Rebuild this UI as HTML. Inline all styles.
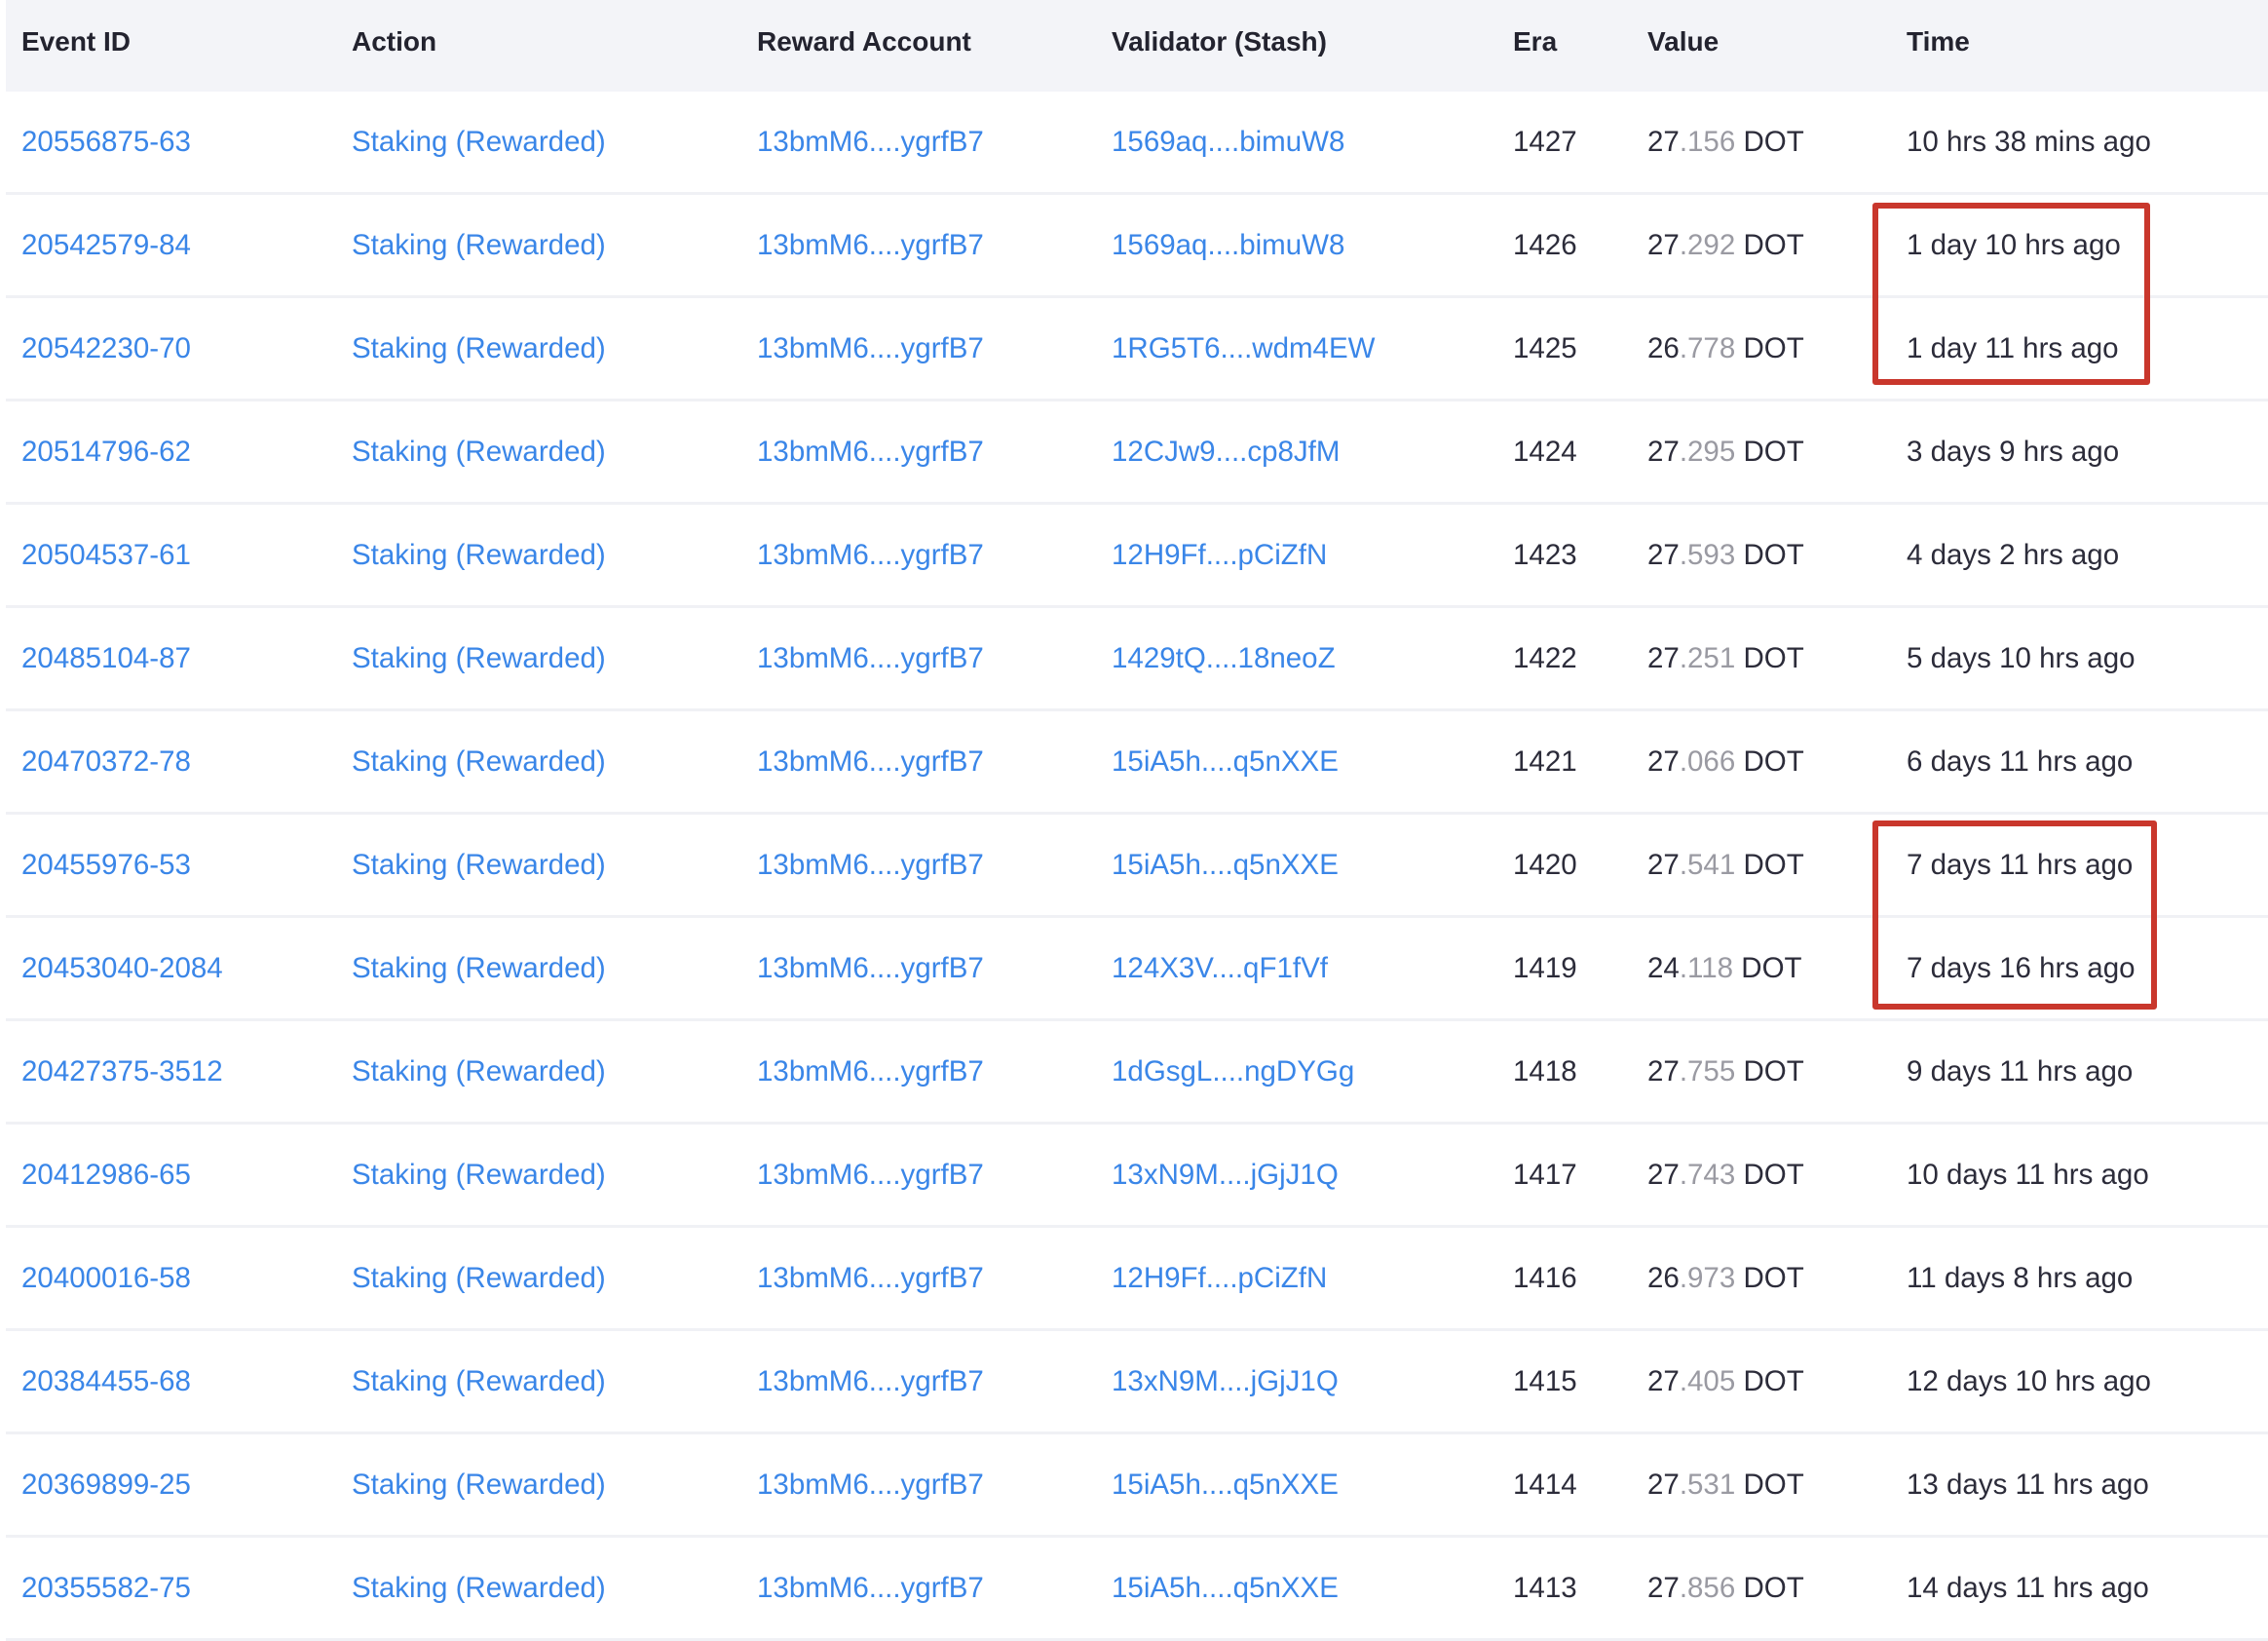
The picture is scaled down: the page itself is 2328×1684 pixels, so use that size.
<!DOCTYPE html>
<html><head><meta charset="utf-8"><style>
*{margin:0;padding:0;box-sizing:border-box}
body{width:2328px;height:1684px;background:#fff;font-family:"Liberation Sans",sans-serif;position:relative;overflow:hidden}
.hd{position:absolute;left:6px;top:0;width:2322px;height:94px;background:#f3f4f8}
.row{position:absolute;left:6px;width:2322px;height:106px;border-bottom:3px solid #f0f1f5}
.c{position:absolute;font-size:29.5px;white-space:nowrap;transform:translateY(-50%);top:50%}
.h .c{color:#23232f;font-weight:600;font-size:28px;top:calc(50% - 4px)}
.l{color:#3a86e8}
.t{color:#2c2c3a}
.g{color:#9a9aa2}
.box{position:absolute;border:6px solid #c9372c;border-radius:3px}
</style></head><body>
<div class="hd h"><div class="c" style="left:16px">Event ID</div><div class="c" style="left:355px">Action</div><div class="c" style="left:771px">Reward Account</div><div class="c" style="left:1135px">Validator (Stash)</div><div class="c" style="left:1547px">Era</div><div class="c" style="left:1685px">Value</div><div class="c" style="left:1951px">Time</div></div>
<div id="rows"></div>
<div class="box" style="left:1922px;top:208px;width:285px;height:187px"></div>
<div class="box" style="left:1922px;top:842px;width:292px;height:194px"></div>
<script>
var d=[["20556875-63","1569aq....bimuW8","1427","27","156","10 hrs 38 mins ago"],
["20542579-84","1569aq....bimuW8","1426","27","292","1 day 10 hrs ago"],
["20542230-70","1RG5T6....wdm4EW","1425","26","778","1 day 11 hrs ago"],
["20514796-62","12CJw9....cp8JfM","1424","27","295","3 days 9 hrs ago"],
["20504537-61","12H9Ff....pCiZfN","1423","27","593","4 days 2 hrs ago"],
["20485104-87","1429tQ....18neoZ","1422","27","251","5 days 10 hrs ago"],
["20470372-78","15iA5h....q5nXXE","1421","27","066","6 days 11 hrs ago"],
["20455976-53","15iA5h....q5nXXE","1420","27","541","7 days 11 hrs ago"],
["20453040-2084","124X3V....qF1fVf","1419","24","118","7 days 16 hrs ago"],
["20427375-3512","1dGsgL....ngDYGg","1418","27","755","9 days 11 hrs ago"],
["20412986-65","13xN9M....jGjJ1Q","1417","27","743","10 days 11 hrs ago"],
["20400016-58","12H9Ff....pCiZfN","1416","26","973","11 days 8 hrs ago"],
["20384455-68","13xN9M....jGjJ1Q","1415","27","405","12 days 10 hrs ago"],
["20369899-25","15iA5h....q5nXXE","1414","27","531","13 days 11 hrs ago"],
["20355582-75","15iA5h....q5nXXE","1413","27","856","14 days 11 hrs ago"]];
var h="";d.forEach(function(r,i){h+='<div class="row" style="top:'+(94+i*106)+'px"><div class="c l" style="left:16px">'+r[0]+'</div><div class="c l" style="left:355px">Staking (Rewarded)</div><div class="c l" style="left:771px">13bmM6....ygrfB7</div><div class="c l" style="left:1135px">'+r[1]+'</div><div class="c t" style="left:1547px">'+r[2]+'</div><div class="c t" style="left:1685px">'+r[3]+'<span class="g">.'+r[4]+'</span> DOT</div><div class="c t" style="left:1951px">'+r[5]+'</div></div>';});
document.getElementById("rows").innerHTML=h;
</script>
</body></html>
